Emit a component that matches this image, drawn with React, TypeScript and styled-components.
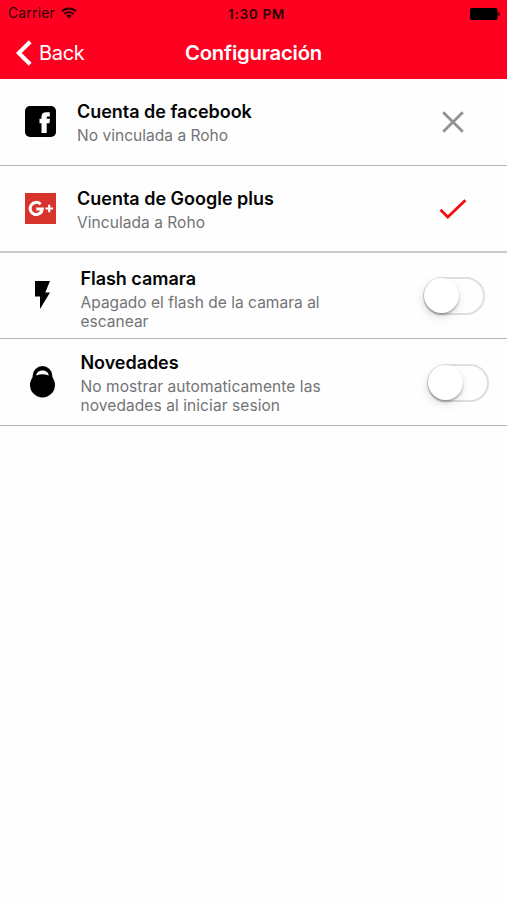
import React from 'react';
import styled, { createGlobalStyle } from 'styled-components';

const Global = createGlobalStyle`
  * { box-sizing: border-box; }
  body { margin: 0; background: #fefefe; font-family: Inter, "Liberation Sans", sans-serif; }
  svg { display: block; flex: none; }
`;

const Screen = styled.main`
  width: 507px;
  height: 900px;
  background: #fefefe;
  overflow: hidden;
`;

const Header = styled.header`
  height: 79px;
  background: #fe0120;
`;

const StatusBar = styled.div`
  height: 26px;
  display: grid;
  grid-template-columns: 1fr auto 1fr;
  align-items: center;
  padding: 2px 7px 0 8px;
  color: #2b0006;
`;

const Carrier = styled.div`
  display: flex;
  align-items: center;
  gap: 6px;
  font-size: 13.8px;
  line-height: 16px;
  padding-bottom: 2px;
  letter-spacing: 0.25px;
`;

const Clock = styled.div`
  font-size: 13.5px;
  font-weight: 600;
  padding-left: 5px;
  letter-spacing: 0.7px;
`;

const Battery = styled.svg`
  justify-self: end;
`;

const NavBar = styled.nav`
  height: 53px;
  display: grid;
  grid-template-columns: 1fr auto 1fr;
  align-items: center;
  color: #fff;
  padding: 0 15px;
`;

const Back = styled.a`
  display: flex;
  align-items: center;
  gap: 7px;
  font-size: 20px;
  letter-spacing: -0.3px;
`;

const Title = styled.h1`
  margin: 0;
  font-size: 20.3px;
  line-height: 24px;
  font-weight: 600;
  letter-spacing: -0.18px;
`;

const Row = styled.section<{ $height: number; $line: number }>`
  height: ${(p) => p.$height}px;
  display: grid;
  grid-template-columns: 77px 1fr 100px;
  border-bottom: ${(p) => p.$line}px solid ${(p) => (p.$line > 1 ? '#cbcbcb' : '#b4b4b4')};
`;

const IconCell = styled.div<{ $top: number; $left: number }>`
  padding: ${(p) => p.$top}px 0 0 ${(p) => p.$left}px;
`;

const Copy = styled.div<{ $top: number; $left: number }>`
  padding: ${(p) => p.$top}px 0 0 ${(p) => p.$left}px;
`;

const RowTitle = styled.h2<{ $track: number }>`
  margin: 0;
  font-size: 18px;
  line-height: 22px;
  font-weight: 600;
  white-space: nowrap;
  color: #050505;
  letter-spacing: ${(p) => p.$track}px;
`;

const Detail = styled.p<{ $gap: number; $track: number }>`
  margin: ${(p) => p.$gap}px 0 0;
  font-size: 15.5px;
  line-height: 19px;
  white-space: nowrap;
  color: #737376;
  letter-spacing: ${(p) => p.$track}px;
`;

const Control = styled.div<{ $top: number; $left: number }>`
  padding: ${(p) => p.$top}px 0 0 ${(p) => p.$left}px;
`;

const Track = styled.button`
  display: block;
  width: 62px;
  height: 38px;
  padding: 0;
  border: 2px solid #dedede;
  border-radius: 19px;
  background: #fefefe;
`;

const Knob = styled.span`
  display: block;
  width: 35px;
  height: 35px;
  margin: -1px 0 0 -1px;
  border-radius: 50%;
  background: #fff;
  box-shadow: 0 2px 2px rgba(0, 0, 0, 0.25), -1px 4px 10px rgba(0, 0, 0, 0.13);
`;

const Toggle = () => (
  <Track role="switch" aria-checked="false">
    <Knob />
  </Track>
);

export default function App() {
  return (
    <Screen>
      <Global />
      <Header>
        <StatusBar>
          <Carrier>
            Carrier
            <svg width="16" height="12" viewBox="0 0 16 12" fill="none" stroke="#2b0006" strokeWidth="1.9">
              <path d="M.9 4.4a10 10 0 0 1 14.2 0M3.4 7a6.5 6.5 0 0 1 9.2 0" />
              <path d="M8 11.5 5.3 8.8a3.8 3.8 0 0 1 5.4 0z" fill="#2b0006" stroke="none" />
            </svg>
          </Carrier>
          <Clock>1:30 PM</Clock>
          <Battery width="30" height="12" viewBox="0 0 30 12">
            <rect width="27.5" height="12" rx="1.8" fill="#000" />
            <path d="M28.2 4q1.8.4 1.8 2t-1.8 2z" fill="#000" />
          </Battery>
        </StatusBar>
        <NavBar>
          <Back>
            <svg width="17" height="26" viewBox="0 0 17 26" fill="none" stroke="#fff" strokeWidth="4">
              <path d="M15.2 1.8 3.8 13l11.4 11.2" />
            </svg>
            Back
          </Back>
          <Title>Configuración</Title>
        </NavBar>
      </Header>

      <Row $height={87} $line={1}>
        <IconCell $top={27} $left={25}>
          <svg width="31" height="31" viewBox="0 0 31 31">
            <rect width="31" height="31" rx="5" fill="#000" />
            <path d="M16.5 27V17.3h-2v-4.6h2v-1.9c0-3.2 1.8-4.6 4.8-4.6h3.5v4.4h-1.7c-1 0-1.4.4-1.4 1.2v.9h3.3l-.5 4.6h-2.8V27z" fill="#fff" />
          </svg>
        </IconCell>
        <Copy $top={22} $left={0}>
          <RowTitle $track={-0.02}>Cuenta de facebook</RowTitle>
          <Detail $gap={3} $track={0.03}>No vinculada a Roho</Detail>
        </Copy>
        <Control $top={32} $left={35}>
          <svg width="22" height="22" viewBox="0 0 22 22" fill="none" stroke="#929292" strokeWidth="2.8">
            <path d="m1.2 1.2 19.6 19.6m0-19.6L1.2 20.8" />
          </svg>
        </Control>
      </Row>

      <Row $height={87} $line={2}>
        <IconCell $top={27} $left={25}>
          <svg width="31" height="31" viewBox="0 0 31 31">
            <path d="M0 0h31v31H0z" fill="#d7342d" />
            <path d="M15.6 11.2a6.1 6.1 0 1 0 1.7 4.8h-6" fill="none" stroke="#fff" strokeWidth="3" />
            <path d="M24.2 11.7v7.6M20.4 15.5H28" stroke="#fff" strokeWidth="2.2" />
          </svg>
        </IconCell>
        <Copy $top={22} $left={0}>
          <RowTitle $track={-0.01}>Cuenta de Google plus</RowTitle>
          <Detail $gap={3} $track={0.05}>Vinculada a Roho</Detail>
        </Copy>
        <Control $top={33} $left={32}>
          <svg width="28" height="20" viewBox="0 0 28 20" fill="none" stroke="#f20d12" strokeWidth="2.8">
            <path d="m1.5 10.7 7.3 7.3L26.4 1.2" />
          </svg>
        </Control>
      </Row>

      <Row $height={86} $line={1}>
        <IconCell $top={28} $left={35}>
          <svg width="15" height="28" viewBox="0 0 15 28">
            <path d="M0 0h15L10.3 11.5H15L5 28V15.5H0z" fill="#000" />
          </svg>
        </IconCell>
        <Copy $top={15} $left={3.5}>
          <RowTitle $track={-0.04}>Flash camara</RowTitle>
          <Detail $gap={2.6} $track={0.02}>Apagado el flash de la camara al<br />escanear</Detail>
        </Copy>
        <Control $top={24} $left={16}>
          <Toggle />
        </Control>
      </Row>

      <Row $height={87} $line={1}>
        <IconCell $top={27} $left={30}>
          <svg width="25" height="32" viewBox="0 0 25 32">
            <circle cx="12.5" cy="19" r="12.5" fill="#000" />
            <path d="M2.6 13V10a9.9 9.9 0 0 1 19.8 0v3z" fill="#000" />
            <path d="M6.3 9.6C6.5 2.8 18.5 2.8 18.7 9.6a16 16 0 0 0-12.4 0z" fill="#fff" />
          </svg>
        </IconCell>
        <Copy $top={13} $left={3.5}>
          <RowTitle $track={-0.05}>Novedades</RowTitle>
          <Detail $gap={2.6} $track={0.08}>No mostrar automaticamente las<br />novedades al iniciar sesion</Detail>
        </Copy>
        <Control $top={25} $left={20}>
          <Toggle />
        </Control>
      </Row>
    </Screen>
  );
}
